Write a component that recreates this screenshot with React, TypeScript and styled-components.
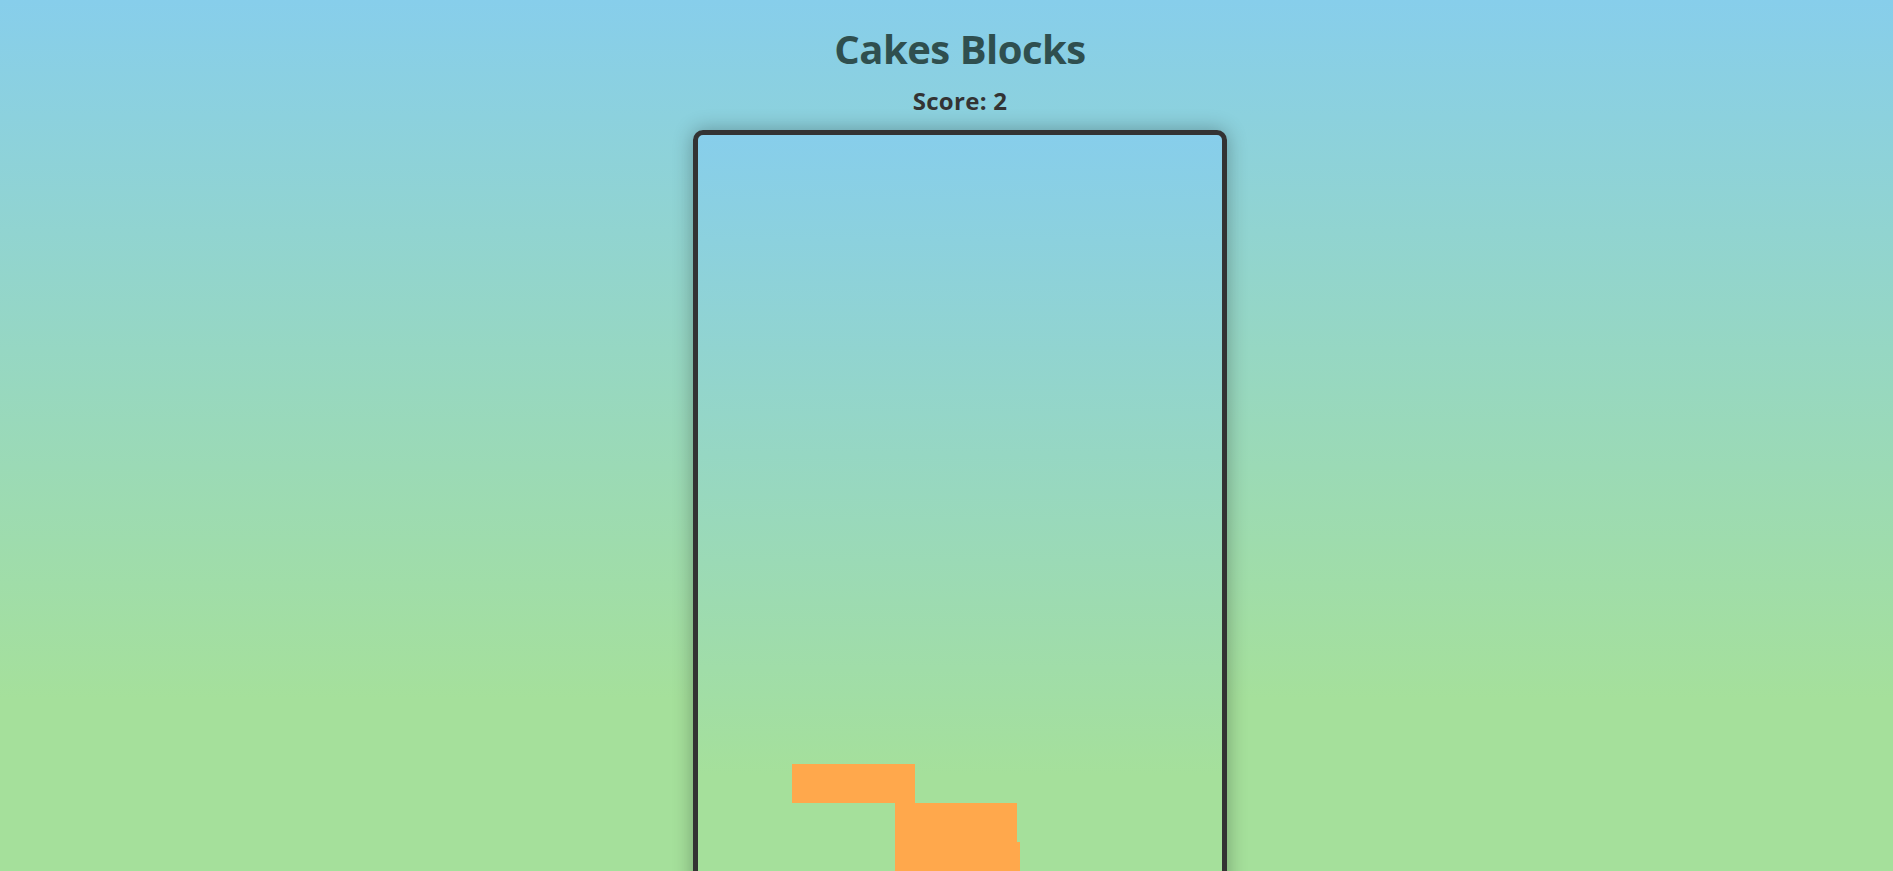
import React from "react";
import styled, { createGlobalStyle } from "styled-components";

const Global = createGlobalStyle`
  html, body {
    margin: 0;
    padding: 0;
    overflow: hidden;
    height: 100%;
  }
  body {
    background: linear-gradient(to bottom, #87ceeb 0px, #a5e09b 700px, #a5e09b 100%);
    font-family: "Open Sans", "Noto Sans", sans-serif;
  }
`;

const Page = styled.main`
  display: flex;
  flex-direction: column;
  align-items: center;
  padding: 25px 0 0 27px;
  min-height: 100vh;
  box-sizing: border-box;
`;

const Title = styled.h1`
  margin: 0;
  font-size: 40px;
  line-height: 48px;
  font-weight: 700;
  letter-spacing: -0.5px;
  color: #2f4f4f;
`;

const Score = styled.div`
  margin-top: 14px;
  font-size: 24px;
  line-height: 28px;
  font-weight: 700;
  letter-spacing: 0.3px;
  color: #333333;
`;

const Board = styled.div`
  position: relative;
  margin-top: 14.5px;
  width: 534px;
  height: 800px;
  box-sizing: border-box;
  border: 5px solid #333333;
  border-radius: 10px;
  background: linear-gradient(to bottom, #87ceeb 0px, #a5e09b 640px, #a5e09b 100%);
  box-shadow: 0 0 20px rgba(0, 0, 0, 0.3);
  overflow: hidden;
  flex-shrink: 0;
`;

const Block = styled.div<{ $x: number; $y: number; $w: number; $h: number }>`
  position: absolute;
  left: ${(p) => p.$x}px;
  top: ${(p) => p.$y}px;
  width: ${(p) => p.$w}px;
  height: ${(p) => p.$h}px;
  background: #ffa84c;
`;

const blocks = [
  { x: 94.3, y: 629, w: 122.4, h: 39.3 },
  { x: 196.7, y: 668.3, w: 122, h: 39.3 },
  { x: 196.7, y: 707.6, w: 125.3, h: 39.3 },
];

export default function App() {
  return (
    <>
      <Global />
      <Page>
        <Title>Cakes Blocks</Title>
        <Score>Score: 2</Score>
        <Board>
          {blocks.map((b, i) => (
            <Block key={i} $x={b.x} $y={b.y} $w={b.w} $h={b.h} />
          ))}
        </Board>
      </Page>
    </>
  );
}
